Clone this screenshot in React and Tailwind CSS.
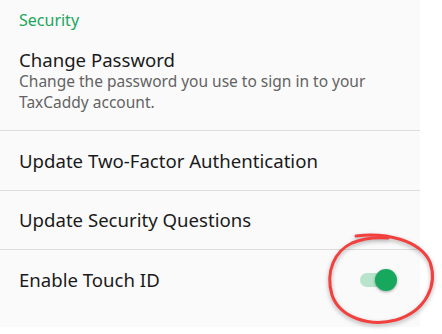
export default function App() {
  const rows = ["Update Two-Factor Authentication", "Update Security Questions"];

  return (
    <div className="relative w-[442px] h-[334px] bg-white overflow-hidden font-['Noto_Sans',sans-serif]">
      <div className="w-[420px] h-[327px] bg-[#fafafa] flex flex-col">
        {/* Section header */}
        <div className="pt-[10px] pl-[19px] text-[16px] leading-[20px] text-[#1aa65b]">
          Security
        </div>

        {/* Change password */}
        <div className="pt-[20px] pb-[17px] pl-[19px] pr-4">
          <div className="text-[18.6px] leading-[20px] text-[#1a1a1a]">Change Password</div>
          <div className="text-[15.5px] leading-[21px] text-[#636363] pt-[1px]">
            Change the password you use to sign in to your
            <br />
            TaxCaddy account.
          </div>
        </div>

        {rows.map((r, i) => (
          <div
            key={i}
            className={
              "border-t border-[#dcdcdc] pl-[19px] flex items-center text-[18.6px] text-[#1a1a1a] " +
              (i === 0 ? "h-[60px]" : "h-[59px]")
            }
          >
            {r}
          </div>
        ))}

        {/* Touch ID */}
        <div className="border-t border-[#dcdcdc] pl-[19px] pr-[23px] h-[60px] flex items-center justify-between text-[18.6px] text-[#1a1a1a]">
          <span>Enable Touch ID</span>
          <div className="relative w-[37px] h-[22px] flex items-center">
            <div className="w-[36px] h-[14px] rounded-full bg-[#b7e4ca]" />
            <div className="absolute right-0 top-0 w-[22px] h-[22px] rounded-full bg-[#17a85e] shadow-[0_1px_3px_rgba(0,0,0,0.35)]" />
          </div>
        </div>
      </div>

      {/* hand-drawn annotation */}
      <svg
        className="absolute left-0 top-0 drop-shadow-[0_2px_2px_rgba(0,0,0,0.3)]"
        width="442"
        height="334"
        viewBox="0 0 442 334"
        fill="none"
      >
        <path
          d="M 356 236 C 385 232, 420 240, 430 262 C 438 285, 426 311, 396 320 C 370 327, 340 318, 332 295 C 325 271, 335 251, 352 243 C 364 238, 376 237, 388 238"
          stroke="#f2403f"
          strokeWidth="3"
          strokeLinecap="round"
        />
      </svg>
    </div>
  );
}
